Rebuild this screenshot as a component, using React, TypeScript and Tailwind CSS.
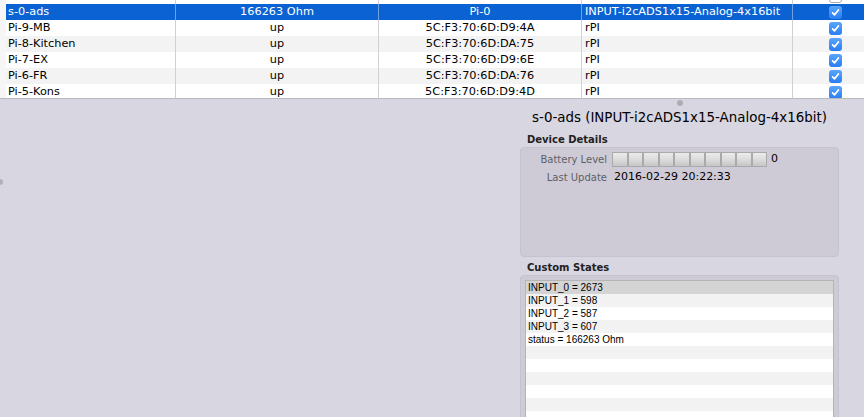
import React from 'react'

type Device = {
  name: string
  state: string
  address: string
  model: string
  enabled: boolean
}

const devices: Device[] = [
  { name: '', state: '', address: '', model: '', enabled: false },
  { name: 's-0-ads', state: '166263 Ohm', address: 'Pi-0', model: 'INPUT-i2cADS1x15-Analog-4x16bit', enabled: true },
  { name: 'Pi-9-MB', state: 'up', address: '5C:F3:70:6D:D9:4A', model: 'rPI', enabled: true },
  { name: 'Pi-8-Kitchen', state: 'up', address: '5C:F3:70:6D:DA:75', model: 'rPI', enabled: true },
  { name: 'Pi-7-EX', state: 'up', address: '5C:F3:70:6D:D9:6E', model: 'rPI', enabled: true },
  { name: 'Pi-6-FR', state: 'up', address: '5C:F3:70:6D:DA:76', model: 'rPI', enabled: true },
  { name: 'Pi-5-Kons', state: 'up', address: '5C:F3:70:6D:D9:4D', model: 'rPI', enabled: true },
]

const SELECTED = 1

const customStates = ['INPUT_0 = 2673', 'INPUT_1 = 598', 'INPUT_2 = 587', 'INPUT_3 = 607', 'status = 166263 Ohm']

function Checkbox({ checked }: { checked: boolean }) {
  if (!checked) {
    return <div className="w-[13px] h-[13px] rounded-[3px] border border-[#a8a8a8] bg-white" />
  }
  return (
    <div className="w-[13px] h-[13px] rounded-[3px] bg-linear-to-b from-[#5aa6fa] to-[#2a7cf2] flex items-center justify-center">
      <svg width="9" height="9" viewBox="0 0 9 9" fill="none">
        <path d="M1.6 4.8 L3.6 6.8 L7.4 2" stroke="white" strokeWidth="1.7" strokeLinecap="round" strokeLinejoin="round" />
      </svg>
    </div>
  )
}

function DeviceRow({ device, index }: { device: Device; index: number }) {
  const selected = index === SELECTED
  const bg = selected ? 'bg-[#0b63d3] text-white' : index % 2 === 1 ? 'bg-[#f3f3f3] text-black' : 'bg-white text-black'
  const sep = selected ? 'border-r border-[#6d9fe2]' : 'border-r border-[#d0d0d0]'

  return (
    <div className={`flex h-[16px] leading-[16px] ${bg}`}>
      <div className={`w-[170px] shrink-0 pl-[2px] truncate ${sep}`}>{device.name}</div>
      <div className={`w-[203px] shrink-0 text-center truncate ${sep}`}>{device.state}</div>
      <div className={`w-[203px] shrink-0 text-center truncate ${sep}`}>{device.address}</div>
      <div className={`w-[211px] shrink-0 pl-[3px] truncate ${sep}`}>{device.model}</div>
      <div className="flex-1 pl-[36px] flex items-center">
        <Checkbox checked={device.enabled} />
      </div>
    </div>
  )
}

function BatteryBar({ level }: { level: number }) {
  return (
    <div className="grid grid-cols-10 w-[155px] h-[15px]">
      {Array.from({ length: 10 }).map((_, i) => (
        <div
          key={i}
          className={
            i < level
              ? 'border border-[#4f8a3c] bg-[#6bbf4e]'
              : 'border border-[#aaaaaa] bg-linear-to-b from-[#ebebeb] via-[#dcdcdc] to-[#c6c6c6]'
          }
        />
      ))}
    </div>
  )
}

export default function App() {
  return (
    <div className="w-[864px] h-[417px] overflow-hidden bg-[#d8d6e0] font-['DejaVu_Sans',sans-serif] text-black">
      {/* device list, scrolled one row down */}
      <div className="h-[99px] overflow-hidden border-b border-[#b9b9bf] bg-[#f6f6f6] pl-[6px] text-[11.3px]">
        <div className="-mt-[12px]">
          {devices.map((d, i) => (
            <DeviceRow key={i} device={d} index={i} />
          ))}
        </div>
      </div>

      <div className="flex">
        {/* left pane with splitter grip */}
        <div className="w-[500px] shrink-0">
          <div className="mt-[80px] -ml-[3px] w-[6px] h-[6px] rounded-full bg-[#b2b1b8]" />
        </div>

        {/* device detail pane */}
        <div className="w-[359px] shrink-0 px-[20px] flex flex-col">
          <div className="mx-auto mt-[1px] w-[6px] h-[6px] rounded-full bg-[#aeadb4]" />
          <div className="mt-[4px] h-[16px] leading-[16px] text-center text-[13.4px] whitespace-nowrap">
            s-0-ads (INPUT-i2cADS1x15-Analog-4x16bit)
          </div>

          <div className="mt-[8px] pl-[7px] h-[12px] leading-[12px] text-[10px] font-bold text-[#222]">Device Details</div>
          <div className="mt-[1px] h-[110px] rounded-[4px] border border-[#c5c3ce] bg-[#cecbd6] pt-[4px]">
            <div className="flex items-center h-[15px]">
              <div className="w-[86px] text-right text-[10px] text-[#5f5f66] whitespace-nowrap">Battery Level</div>
              <div className="ml-[5px]">
                <BatteryBar level={0} />
              </div>
              <div className="ml-[4px] text-[11px]">0</div>
            </div>
            <div className="mt-[3px] flex items-center h-[14px]">
              <div className="w-[86px] text-right text-[10px] text-[#5f5f66] whitespace-nowrap">Last Update</div>
              <div className="ml-[7px] text-[11px] whitespace-nowrap">2016-02-29 20:22:33</div>
            </div>
          </div>

          <div className="mt-[5px] pl-[7px] h-[12px] leading-[12px] text-[10px] font-bold text-[#222]">Custom States</div>
          <div className="mt-[1px] h-[160px] rounded-[4px] border border-[#c5c3ce] bg-[#cecbd6] px-[4px] pt-[4px]">
            <div className="h-full border border-[#b4b4b4] bg-white font-['Liberation_Sans',Arial,sans-serif] text-[10px]">
              {Array.from({ length: 12 }).map((_, i) => (
                <div
                  key={i}
                  className={`h-[13px] leading-[13px] pl-[2px] ${
                    i === 0 ? 'bg-[#d4d4d4]' : i % 2 === 1 ? 'bg-[#f2f2f2]' : 'bg-white'
                  }`}
                >
                  {customStates[i] ?? ''}
                </div>
              ))}
            </div>
          </div>
        </div>
      </div>
    </div>
  )
}
